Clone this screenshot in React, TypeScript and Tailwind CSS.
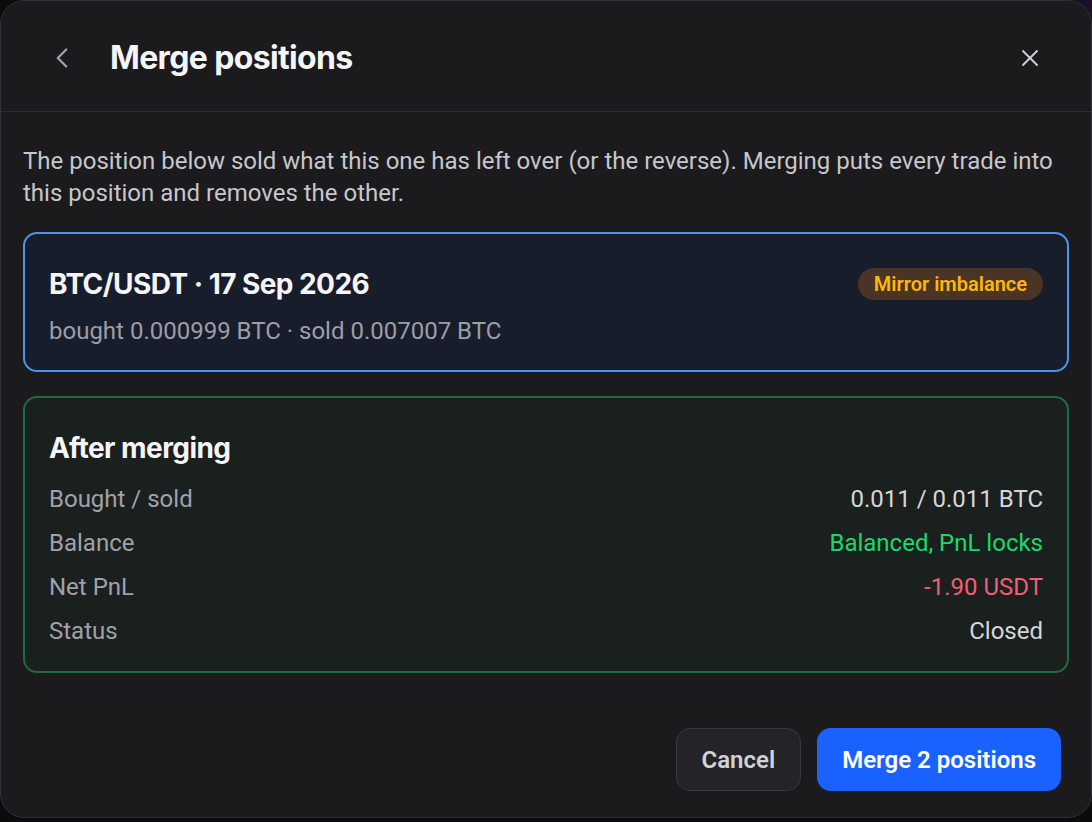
import { ChevronLeft, X } from "lucide-react";

type Row = { label: string; value: string; tone?: "plain" | "good" | "bad" };

const rows: Row[] = [
  { label: "Bought / sold", value: "0.011 / 0.011 BTC" },
  { label: "Balance", value: "Balanced, PnL locks", tone: "good" },
  { label: "Net PnL", value: "-1.90 USDT", tone: "bad" },
  { label: "Status", value: "Closed" },
];

const toneClass = {
  plain: "text-[#d6d6da]",
  good: "text-[#1cd86c]",
  bad: "text-[#f45d73]",
};

const heading = "font-['Inter',sans-serif] font-bold tracking-[-0.02em] text-[#f5f5f7]";

export default function App() {
  return (
    <div className="h-[822px] bg-[radial-gradient(circle_at_100%_0%,#1d1029_0,#0b0a0d_120px)] font-['Roboto',sans-serif]">
      <div className="flex h-[818px] flex-col rounded-[24px] border border-[#303035] bg-[#1b1b1e]">
        <header className="flex h-[111px] shrink-0 items-center border-b border-[#2d2d32] pl-[44px] pr-[47px] pt-[3px]">
          <button className="flex h-[34px] w-[34px] items-center justify-center text-[#a3a3aa]">
            <ChevronLeft size={34} strokeWidth={1.6} />
          </button>
          <h2 className={`${heading} ml-[31px] text-[32px] leading-[40px]`}>Merge positions</h2>
          <button className="ml-auto flex h-[28px] w-[28px] items-center justify-center text-[#cfcfd4]">
            <X size={28} strokeWidth={1.6} />
          </button>
        </header>

        <div className="flex flex-1 flex-col px-[22px] pb-[26px] pt-[33px]">
          <p className="text-[24px] leading-[32px] text-[#c6c6cc]">
            The position below sold what this one has left over (or the reverse). Merging puts every trade into
            this position and removes the other.
          </p>

          <section className="mt-[23px] rounded-[14px] border-2 border-[#4b93ec] bg-[#181d2b] px-[24px] pb-[25px] pt-[34px]">
            <div className="flex h-[32px] items-center justify-between">
              <h3 className={`${heading} text-[28px] leading-[32px]`}>BTC/USDT · 17 Sep 2026</h3>
              <span className="rounded-full bg-[#4a3426] px-[16px] text-[20px] font-semibold leading-[32px] text-[#ffb703]">
                Mirror imbalance
              </span>
            </div>
            <p className="mt-[17px] text-[24px] leading-[28px] text-[#9d9da6]">
              bought 0.000999 BTC · sold 0.007007 BTC
            </p>
          </section>

          <section className="mt-[24px] rounded-[14px] border-2 border-[#1c6b41] bg-[#1a201e] px-[24px] pb-[18px] pt-[34px]">
            <h3 className={`${heading} text-[28px] leading-[32px]`}>After merging</h3>
            <dl className="mt-[13px] flex flex-col">
              {rows.map((r) => (
                <div key={r.label} className="flex h-[44px] items-center justify-between text-[24px]">
                  <dt className="text-[#a1a1a9]">{r.label}</dt>
                  <dd className={toneClass[r.tone ?? "plain"]}>{r.value}</dd>
                </div>
              ))}
            </dl>
          </section>

          <footer className="mt-auto flex justify-end gap-[16px] pr-[8px]">
            <button className="h-[63px] rounded-[14px] border border-[#37373c] bg-[#242428] px-[25px] text-[24px] font-semibold text-[#d2d2d6]">
              Cancel
            </button>
            <button className="h-[63px] rounded-[14px] bg-[#1962ff] px-[25px] text-[24px] font-semibold text-white">
              Merge 2 positions
            </button>
          </footer>
        </div>
      </div>
    </div>
  );
}
